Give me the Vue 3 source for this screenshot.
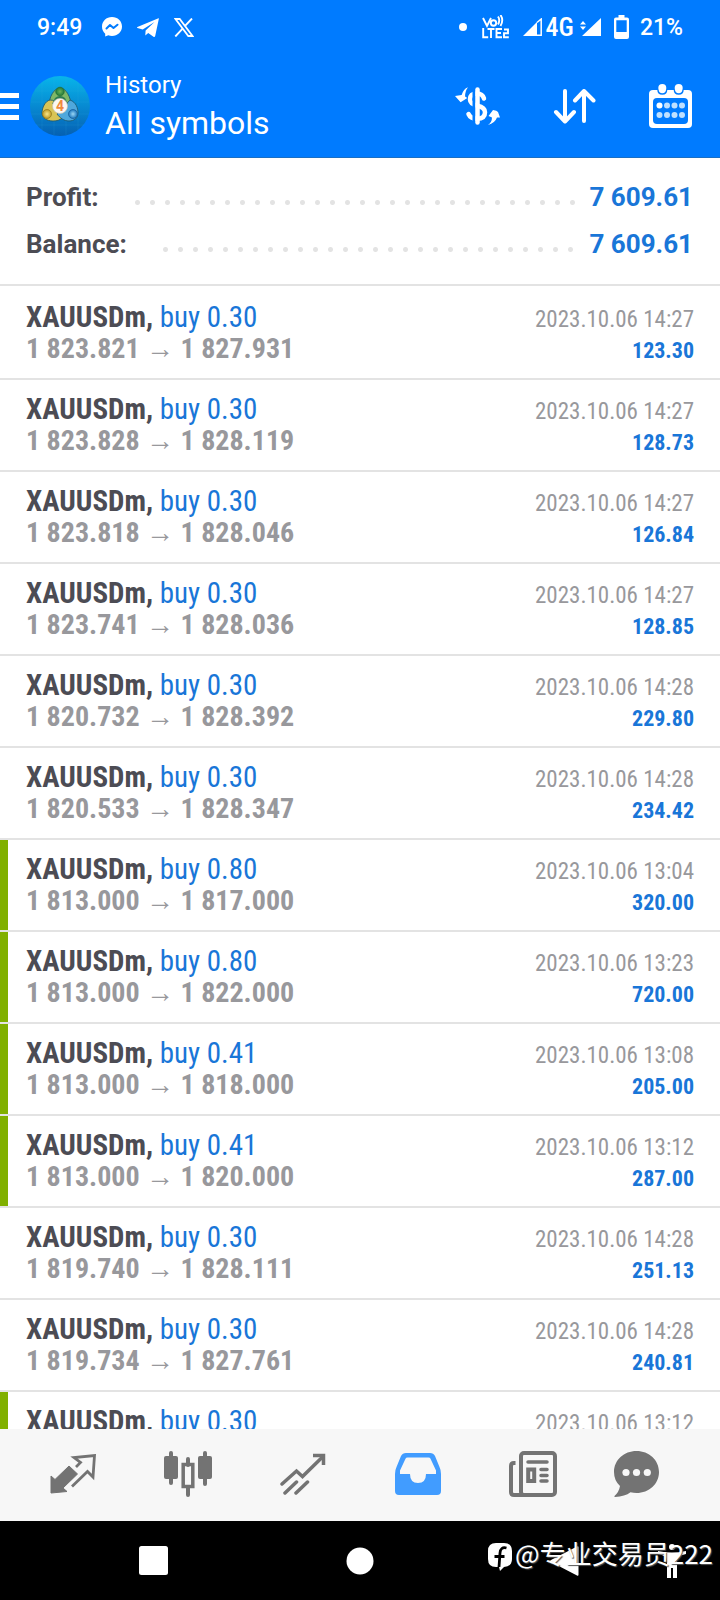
<script setup>
const summary = [
  { label: 'Profit:', value: '7 609.61' },
  { label: 'Balance:', value: '7 609.61' },
]

const deal = (volume, open, close, time, profit, closedByTarget = false) => ({
  volume, open, close, time: `2023.10.06 ${time}`, profit, closedByTarget,
})

const deals = [
  deal('0.30', '1 823.821', '1 827.931', '14:27', '123.30'),
  deal('0.30', '1 823.828', '1 828.119', '14:27', '128.73'),
  deal('0.30', '1 823.818', '1 828.046', '14:27', '126.84'),
  deal('0.30', '1 823.741', '1 828.036', '14:27', '128.85'),
  deal('0.30', '1 820.732', '1 828.392', '14:28', '229.80'),
  deal('0.30', '1 820.533', '1 828.347', '14:28', '234.42'),
  deal('0.80', '1 813.000', '1 817.000', '13:04', '320.00', true),
  deal('0.80', '1 813.000', '1 822.000', '13:23', '720.00', true),
  deal('0.41', '1 813.000', '1 818.000', '13:08', '205.00', true),
  deal('0.41', '1 813.000', '1 820.000', '13:12', '287.00', true),
  deal('0.30', '1 819.740', '1 828.111', '14:28', '251.13'),
  deal('0.30', '1 819.734', '1 827.761', '14:28', '240.81'),
  deal('0.30', '', '', '13:12', '', true),
]
</script>

<template>
  <div class="screen">
    <header class="top">
      <div class="status">
        <span class="clock">9:49</span>
        <svg class="s-messenger" width="20" height="20" viewBox="0 0 20 20">
          <path fill="#fff" d="M10 0C4.300 0 0 4.100 0 9.600c0 3 1.200 5.400 3.200 7.100V19.600l3.100-1.300c1.100.4 2.400.6 3.700.6 5.700 0 10-4 10-9.400S15.700 0 10 0z" />
          <path fill="none" stroke="#007bff" stroke-width="2" stroke-linejoin="round" stroke-linecap="round" d="M4.500 11.500l3.500-3.500 3.500 3 4-3.300" />
        </svg>
        <svg class="s-telegram" width="22" height="19" viewBox="0 0 22 19">
          <path fill="#fff" d="M21.500.3L.4 9c-.6.300-.5.700 0 .900l5.300 1.700L17.500 4 8.600 12.600l-.3 4.900 2.900-2.600 5.300 3.900c.8.400 1.500.1 1.700-.8L21.800 1c.1-.6 0-.8-.3-.7z" />
        </svg>
        <svg class="s-x" width="20" height="19" viewBox="0 0 20 19">
          <path fill="none" stroke="#fff" stroke-width="1.800" d="M1.500 1h4.200l12.800 17h-4.200z" />
          <path stroke="#fff" stroke-width="1.900" d="M18 .5l-7.200 7.700M8.600 10.700L1.300 18.500" />
        </svg>
        <span class="fill"></span>
        <svg width="8" height="8" viewBox="0 0 8 8"><circle cx="4" cy="4" r="4" fill="#fff" /></svg>
        <svg class="s-volte" width="27" height="24" viewBox="0 0 27 24" fill="none" stroke="#fff" stroke-width="1.900">
          <path d="M1 3l4 8 4-8M16 1.500q2.500 3.500 0 8M18.500 0q3.500 5 0 11" />
          <circle cx="11.500" cy="8" r="2.700" />
          <path d="M1.200 13v9.200h5M5.500 14h7M9 14v9M20 14h-5.500v8.200H20M14.500 18H19M22 14.500h4v3.700h-4v4h4.800" />
        </svg>
        <svg class="s-signal" width="19" height="18" viewBox="0 0 19 18">
          <path fill="#fff" d="M0 18L14 4v14z" />
          <path fill="none" stroke="#fff" stroke-width="1.500" d="M14 4.500L18.200 1v16.200H13" />
        </svg>
        <span class="network">4G</span>
        <svg class="s-data" width="21" height="18" viewBox="0 0 21 18" fill="#fff">
          <path d="M0 6.500L3 3l3 3.500zM0 8.500L3 12l3-3.500zM2 18L21 0v18z" />
        </svg>
        <svg class="s-battery" width="15" height="24" viewBox="0 0 15 24">
          <path fill="#fff" fill-rule="evenodd" d="M4.500 0h6v2.500H13q2 0 2 2V22q0 2-2 2H2q-2 0-2-2V4.500q0-2 2-2h2.500zM2.300 5.200V17h10.400V5.200z" />
        </svg>
        <span class="percent">21%</span>
      </div>

      <div class="bar">
        <button class="plain" aria-label="Menu">
          <svg width="19" height="29" viewBox="0 0 19 29" fill="#fff">
            <path d="M0 2h19v5H0zM0 13h19v5H0zM0 24h19v5H0z" />
          </svg>
        </button>
        <svg class="logo" width="60" height="60" viewBox="0 0 60 60">
          <defs>
            <linearGradient id="disc" x1="0" y1="0" x2="0" y2="1">
              <stop offset="0" stop-color="#08b5ea" />
              <stop offset="0.550" stop-color="#0786cf" />
              <stop offset="1" stop-color="#0560b2" />
            </linearGradient>
            <radialGradient id="green"><stop offset="0" stop-color="#6fb35c" /><stop offset="1" stop-color="#1f7a38" /></radialGradient>
            <radialGradient id="gold"><stop offset="0" stop-color="#f7e68a" /><stop offset="1" stop-color="#bf9a22" /></radialGradient>
            <radialGradient id="azure"><stop offset="0" stop-color="#9ad6f5" /><stop offset="1" stop-color="#1b76bd" /></radialGradient>
          </defs>
          <circle cx="30" cy="30" r="30" fill="url(#disc)" />
          <path stroke="#36b6e6" stroke-opacity="0.150" d="M5 15h50M1 26h58M1 38h58M6 49h48M12 6v48M24 1v58M36 1v58M48 6v48" />
          <g stroke="#1d5568" stroke-width="0.800">
            <path fill="#7fb866" d="M30 12c6 0 11 9 11 18H19c0-9 5-18 11-18z" />
            <path fill="#d9c455" d="M20 24c7 0 10 6 12 18-2 2-5 3-9 3-6 0-11-3-11-8s3-12 8-13z" />
            <path fill="#4fa8dc" d="M40 24c6 2 8 8 8 13 0 5-4 8-9 8-5 0-9-3-12-7z" />
          </g>
          <path fill="#2c7c51" d="M25 22q5-4 10 0l3 6H22z" />
          <circle cx="30" cy="15.500" r="4.300" fill="url(#green)" stroke="#276f35" stroke-width="0.700" />
          <circle cx="17" cy="38" r="4.500" fill="url(#gold)" stroke="#8e7520" stroke-width="0.700" />
          <circle cx="43" cy="38" r="4.500" fill="url(#azure)" stroke="#175c98" stroke-width="0.700" />
          <circle cx="30" cy="30" r="7.500" fill="#fbf7f2" stroke="#c9c4b4" stroke-width="0.700" />
          <text x="30" y="35" text-anchor="middle" class="logo-digit">4</text>
        </svg>
        <div class="titles">
          <div class="subtitle">History</div>
          <h1>All symbols</h1>
        </div>
        <div class="actions">
          <button class="plain" aria-label="Filter by symbol">
            <svg width="45" height="38" viewBox="0 0 45 38">
              <path fill="none" stroke="#fff" stroke-width="4.500" stroke-linecap="round" d="M29 11.500Q27.500 6.500 22 6.500q-7 0-7 6 0 4.500 7.500 6.200t7.500 6.500q0 6.500-8 6.500-6.500 0-8.500-4.700" />
              <path stroke="#007bff" stroke-width="3" d="M19 2v34" />
              <path stroke="#fff" stroke-width="4.500" stroke-linecap="round" d="M22.500 2.500v33" />
              <path fill="#fff" d="M13 .3Q8.500 2 6.600 8L0 9l5.600 6.200L12.300 11l-2.200-1.600Q10 4 13 .3zM33 38Q37 35 37 30.500L33.500 29l4.500-6q4 .5 5 2l2 5.500h-3Q40 36 33 38z" />
            </svg>
          </button>
          <button class="plain" aria-label="Sort">
            <svg width="43" height="36" viewBox="0 0 43 36" fill="none" stroke="#fff" stroke-width="4" stroke-linecap="round" stroke-linejoin="round">
              <path d="M12 3v30M3 24l9 9.500 9-9.500M31 33V3M22 12.500L31 3l9.500 9.500" />
            </svg>
          </button>
          <button class="plain" aria-label="Period">
            <svg width="43" height="44" viewBox="0 0 43 44">
              <rect y="6" width="43" height="38" rx="4" fill="#fff" />
              <rect x="4" y="14" width="35" height="26" rx="4" fill="#007bff" />
              <path stroke="#007bff" stroke-width="1.500" fill="none" d="M9 5.500q0 4.500 4.300 4.500t4.300-4.500M25.400 5.500q0 4.500 4.300 4.500T34 5.500" />
              <circle cx="13.300" cy="4" r="4" fill="#fff" />
              <circle cx="29.700" cy="4" r="4" fill="#fff" />
              <circle cx="10.500" cy="21.500" r="3" fill="#fff" />
              <g fill="#bfe0ff">
                <circle cx="18" cy="21.500" r="3" /><circle cx="25.500" cy="21.500" r="3" /><circle cx="33" cy="21.500" r="3" />
                <circle cx="10.500" cy="31" r="3" /><circle cx="18" cy="31" r="3" /><circle cx="25.500" cy="31" r="3" /><circle cx="33" cy="31" r="3" />
              </g>
            </svg>
          </button>
        </div>
      </div>
    </header>

    <dl class="summary">
      <div v-for="item in summary" :key="item.label" class="total">
        <dt>{{ item.label }}</dt>
        <span class="leader"></span>
        <dd>{{ item.value }}</dd>
      </div>
    </dl>

    <ul class="deals">
      <li v-for="(d, i) in deals" :key="i" class="deal" :class="{ target: d.closedByTarget }">
        <div class="line">
          <span class="name"><b>XAUUSDm,</b> <span class="side">buy {{ d.volume }}</span></span>
          <time>{{ d.time }}</time>
        </div>
        <div v-if="d.open" class="line">
          <span class="prices">{{ d.open }} <span class="arrow">→</span> {{ d.close }}</span>
          <span class="profit">{{ d.profit }}</span>
        </div>
      </li>
    </ul>

    <nav class="tabs">
      <button class="plain" aria-label="Quotes">
        <svg width="46" height="40" viewBox="0 0 46 40">
          <path fill="#737373" stroke="#737373" stroke-linejoin="round" d="M19 12l8.500 8-14.500 14 4 3.500L1 39V22l4 3.500z" />
          <path fill="none" stroke="#737373" stroke-width="2.800" d="M26 13l4.500-4.500-6.500-5L44.500 1.500 43 23l-5.500-5.500L22 32.500" />
        </svg>
      </button>
      <button class="plain" aria-label="Charts">
        <svg width="48" height="46" viewBox="0 0 48 46">
          <g stroke="#737373" stroke-width="4" stroke-linecap="round"><path d="M7 2v30M41 2v31M24 8v6M24 36v8" /></g>
          <rect y="5" width="14" height="23" rx="2" fill="#737373" />
          <rect x="34" y="5" width="14" height="23" rx="2" fill="#737373" />
          <rect x="19.200" y="13.500" width="9.600" height="22" fill="none" stroke="#737373" stroke-width="3.500" />
        </svg>
      </button>
      <button class="plain" aria-label="Trade">
        <svg width="46" height="42" viewBox="0 0 46 42" fill="none" stroke="#737373" stroke-width="3.500">
          <path stroke-linecap="round" d="M2 31L16.500 18l6 5.500L43 3.500M5 40l11.500-11M16 40l11.500-11" />
          <path d="M33 2.500h10.500V12" />
        </svg>
      </button>
      <button class="plain" aria-label="History">
        <svg width="46" height="42" viewBox="0 0 46 42">
          <path fill="#419cff" fill-rule="evenodd" d="M11 0h24q3.500 0 5 3l4.500 11Q46 17 46 21v17q0 4-4 4H4q-4 0-4-4V21q0-4 1.500-7L6 3q1.500-3 5-3zM12.500 4.500q-1.500 0-2 1.200L5 17.500V21h10q0 9 8 9t8-9h10v-3.500L35.500 5.700q-.5-1.200-2-1.200z" />
        </svg>
      </button>
      <button class="plain" aria-label="News">
        <svg width="48" height="46" viewBox="0 0 48 46" fill="none" stroke="#737373">
          <rect x="12" y="2" width="34" height="42" rx="3" stroke-width="4" />
          <path stroke-width="4" d="M6.500 12H5q-3 0-3 3v26q0 3 3 3h10" />
          <path stroke-width="3.500" stroke-linecap="round" d="M19 11h19M32 18.500h6M32 24.500h6M32 30h6" />
          <rect x="19.200" y="18.500" width="6" height="11.500" stroke-width="4" />
        </svg>
      </button>
      <button class="plain" aria-label="Messages">
        <svg width="45" height="46" viewBox="0 0 45 46">
          <path fill="#737373" d="M22.500 0C35 0 45 9 45 21S35 42 22.500 42q-3 0-6-.8Q11 45.500 1 46q-1 0-.5-1 4.500-4 5.500-10Q0 29.500 0 21C0 9 10 0 22.500 0z" />
          <g fill="#f7f7f7"><circle cx="12" cy="21.500" r="3.600" /><circle cx="22.500" cy="21.500" r="3.600" /><circle cx="33.300" cy="21.500" r="3.600" /></g>
        </svg>
      </button>
    </nav>

    <div class="system">
      <button class="plain recent" aria-label="Recent apps">
        <svg width="29" height="29" viewBox="0 0 29 29"><rect width="29" height="29" rx="2.500" fill="#fff" /></svg>
      </button>
      <button class="plain home" aria-label="Home">
        <svg width="28" height="28" viewBox="0 0 28 28"><circle cx="14" cy="14" r="13.500" fill="#fff" /></svg>
      </button>
      <button class="plain back" aria-label="Back">
        <svg width="29" height="30" viewBox="0 0 29 30"><path fill="#fff" d="M27 .5q1.500-.8 1.500 1v27q0 1.800-1.500 1L1 16q-1.500-1 0-2z" /></svg>
      </button>
      <button class="plain access" aria-label="Accessibility">
        <svg width="28" height="34" viewBox="0 0 28 34" fill="#fff">
          <circle cx="14" cy="3" r="3" />
          <path d="M0 7q14 3 28 0v3q-5 1-8 3l-1 4v17h-4V24h-2v10H9V17l-1-4q-3-2-8-3z" />
        </svg>
      </button>
      <div class="credit">
        <svg width="24" height="28" viewBox="0 0 24 28">
          <path fill="#fff" d="M8 0h8q8 0 8 8v8q0 7.500-8 8l-4 4-1-4H8q-8 0-8-8V8Q0 0 8 0z" />
          <path fill="none" stroke="#000" stroke-width="2.800" d="M18.500 5q-6-1.500-6.500 5l-1 14M6.500 13.500h10" />
        </svg>
        <span>@专业交易员222</span>
      </div>
    </div>
  </div>
</template>

<style>
body {
  margin: 0;
}
</style>

<style scoped>
.screen {
  display: flex;
  flex-direction: column;
  height: 100vh;
  background: #fff;
  color: #4c4c54;
  font-family: Roboto, "Liberation Sans", sans-serif;
}

svg {
  display: block;
  flex: none;
}

.plain {
  display: block;
  padding: 0;
  border: 0;
  background: none;
}

.top {
  flex: none;
  color: #fff;
  background: #007bff;
  border-bottom: 1px solid #1a6fc4;
}

.status {
  display: flex;
  align-items: center;
  height: 54px;
  padding: 0 37px;
  font-size: 23px;
  font-weight: 500;
}

.s-messenger {
  margin-left: 20px;
}

.s-telegram,
.s-x {
  margin-left: 15px;
}

.fill {
  flex: 1;
}

.s-volte {
  margin-left: 15px;
}

.s-signal {
  margin-left: 14px;
}

.network {
  margin-left: 4px;
  font-family: "Roboto Condensed", Roboto, "Liberation Sans", sans-serif;
  font-size: 26px;
}

.s-data {
  margin-left: 6px;
}

.s-battery {
  margin-left: 13px;
}

.percent {
  margin-left: 11px;
}

.bar {
  display: flex;
  align-items: center;
  height: 103px;
  padding-right: 28px;
}

.logo {
  margin: 0 15px 0 11px;
}

.logo-digit {
  font-size: 14px;
  font-weight: 700;
  fill: #f08a3c;
}

.titles {
  flex: 1;
  padding-bottom: 2px;
}

.subtitle {
  font-size: 24px;
  line-height: 36px;
}

h1 {
  margin: 0;
  font-size: 32px;
  font-weight: 400;
  line-height: 40px;
}

.actions {
  display: flex;
  align-items: center;
  gap: 53px;
}

.summary {
  flex: none;
  margin: 0;
  padding: 15px 27px 17px 26px;
  border-bottom: 2px solid #e3e3e3;
}

.total {
  display: flex;
  align-items: center;
  height: 47px;
  font-size: 26px;
  font-weight: 700;
}

.leader {
  flex: 1;
  height: 5px;
  margin: 12px 12px 0 31px;
  background: radial-gradient(circle, #e3e3e3 2px, transparent 3px) 0 0 / 15px 5px repeat-x;
}

dd {
  margin: 0;
  color: #1976d8;
}

.deals {
  flex: 1;
  min-height: 0;
  margin: 0;
  padding: 2px 0 0;
  overflow: hidden;
  list-style: none;
  font-family: "Roboto Condensed", Roboto, "Liberation Sans", sans-serif;
}

.deal {
  box-sizing: border-box;
  height: 92px;
  padding: 13px 26px 0;
  border-bottom: 2px solid #e3e3e3;
}

.target {
  background: linear-gradient(#80b000, #80b000) left / 8px 100% no-repeat;
}

.line {
  display: flex;
  align-items: baseline;
  justify-content: space-between;
  height: 32px;
  line-height: 32px;
  white-space: nowrap;
}

.name {
  font-size: 29px;
}

.side,
.profit {
  color: #1976d8;
}

time {
  color: #98989c;
  font-size: 23px;
}

.prices {
  color: #98989c;
  font-size: 28px;
  font-weight: 700;
}

.arrow {
  font-family: "Liberation Sans", sans-serif;
  font-weight: 400;
}

.profit {
  font-size: 22px;
  font-weight: 700;
}

.tabs {
  flex: none;
  display: grid;
  grid-template-columns: repeat(5, 5fr) 4fr;
  place-items: center;
  height: 92px;
  padding: 0 38px 2px 15px;
  box-sizing: border-box;
  background: #f7f7f7;
}

.system {
  position: relative;
  flex: none;
  display: grid;
  grid-template-columns: 139fr 29px 178fr 28px 176fr 29px 79fr 28px 34fr;
  align-items: center;
  height: 79px;
  background: #000;
}

.recent {
  grid-column: 2;
}

.home {
  grid-column: 4;
}

.back {
  grid-column: 6;
}

.access {
  grid-column: 8;
}

.credit {
  position: absolute;
  right: 7px;
  top: 14px;
  display: flex;
  align-items: flex-end;
  gap: 3px;
  color: #fff;
  font-family: "Noto Sans CJK SC", sans-serif;
  font-size: 26px;
  line-height: 36px;
  text-shadow: 1px 1px 1px #555;
}
</style>
